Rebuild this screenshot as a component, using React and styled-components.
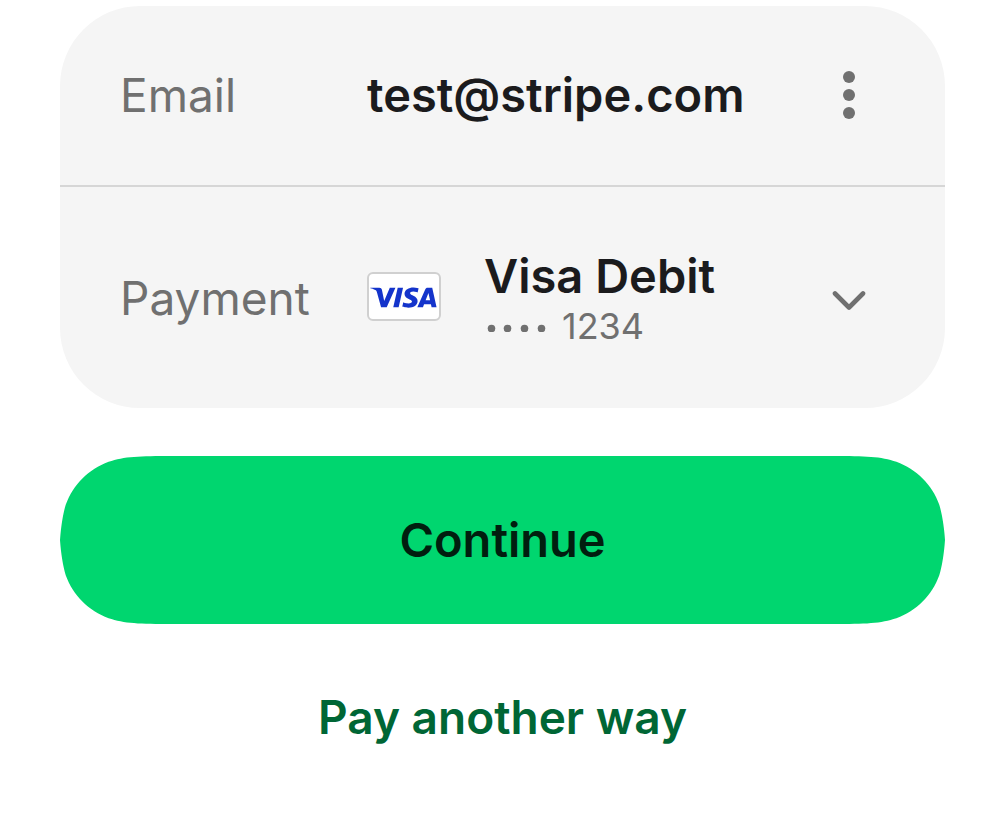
import React from "react";
import styled, { createGlobalStyle } from "styled-components";

const GlobalStyle = createGlobalStyle`
  *, *::before, *::after { box-sizing: border-box; }
  body {
    margin: 0;
    background: #ffffff;
    color: #1b1b1d;
    font-family: Inter, "Liberation Sans", sans-serif;
  }
  button { font-family: inherit; cursor: pointer; }
`;

// Continuous-curvature corner, as cubic segments running from the flat top
// edge to the middle of the left side of a pill 168px tall.
const cornerCurves = [
  [[118, 0], [84, 0], [67, 0], [51.5, 5]],
  [[48.6, 5.8], [28.6, 13], [13, 28.6], [5.8, 48.6]],
  [[5.8, 48.6], [3, 57.5], [1, 70], [0, 84]],
];

function cubicPoint([a, b, c, d], t) {
  const u = 1 - t;
  return [0, 1].map(
    (k) => u * u * u * a[k] + 3 * u * u * t * b[k] + 3 * u * t * t * c[k] + t * t * t * d[k]
  );
}

// The corner mirrored to all four sides, as a CSS polygon whose ends keep
// their shape while the button stretches.
function smoothPill(curves, height) {
  const steps = 16;
  const corner = curves.flatMap((curve) =>
    Array.from({ length: steps + 1 }, (_, i) => cubicPoint(curve, i / steps))
  );
  const lower = [...corner].reverse().map(([x, y]) => [x, height - y]);
  const side = [...corner, ...lower];
  const left = side.map(([x, y]) => `${x.toFixed(2)}px ${y.toFixed(2)}px`);
  const right = [...side].reverse().map(([x, y]) => `calc(100% - ${x.toFixed(2)}px) ${y.toFixed(2)}px`);
  return `polygon(${[...left, ...right].join(", ")})`;
}

const Checkout = styled.main`
  display: flex;
  flex-direction: column;
  padding: 6px 60px 60px;
`;

const Details = styled.section`
  background: #f5f5f5;
  border-radius: 80px;
  margin-bottom: 48px;
`;

const Row = styled.div`
  display: grid;
  grid-template-columns: 247px 1fr 72px;
  align-items: center;
  height: ${(p) => p.$height}px;
  padding: 0 60px ${(p) => p.$bottom || 0}px;

  & + & { border-top: 2px solid #d6d6d6; }
`;

const Label = styled.span`
  color: #707070;
  font-size: 46px;
  line-height: 56px;
`;

const Value = styled.span`
  font-size: 47px;
  font-weight: 600;
  line-height: 56px;
  white-space: nowrap;
`;

const Method = styled.div`
  display: flex;
  align-items: center;
  gap: 43px;
`;

const MethodText = styled.div`
  display: flex;
  flex-direction: column;
`;

const CardNumber = styled.span`
  display: flex;
  align-items: center;
  gap: 16px;
  color: #707070;
  font-size: 36px;
  line-height: 44px;
`;

const MaskDots = styled.svg`
  width: 62px;
  height: 12px;
  fill: currentColor;
`;

const CardLogo = styled.svg`
  flex: none;
  width: 74px;
  height: 49px;
  margin-bottom: 3px;
`;

const IconButton = styled.button`
  display: grid;
  place-items: center;
  width: 72px;
  height: 72px;
  padding: 0;
  border: 0;
  background: transparent;
  color: #707070;
`;

const PrimaryButton = styled.button`
  height: 168px;
  border: 0;
  clip-path: ${smoothPill(cornerCurves, 168)};
  background: #00d66f;
  color: #011e0f;
  font-size: 47px;
  font-weight: 600;
  line-height: 56px;
  margin-bottom: 65px;
`;

const TextButton = styled.button`
  align-self: center;
  padding: 0;
  border: 0;
  background: transparent;
  color: #006635;
  font-size: 46px;
  font-weight: 600;
  line-height: 56px;
`;

function VisaLogo() {
  return (
    <CardLogo viewBox="0 0 74 49" role="img" aria-label="Visa">
      <rect x="1" y="1" width="72" height="47" rx="5" fill="#fff" stroke="#d0d0d0" strokeWidth="2" />
      <g transform="translate(3.2 15.4) scale(.0664 .0624)" fill="#1434cb">
        <path d="M651.19.5c-70.93 0-134.32 36.77-134.32 104.69 0 77.9 112.42 83.28 112.42 122.42 0 16.48-18.88 31.23-51.14 31.23-45.77 0-79.98-20.61-79.98-20.61l-14.64 68.55s39.41 17.41 91.73 17.41c77.55 0 138.58-38.57 138.58-107.66 0-82.32-112.89-87.54-112.89-123.86 0-12.91 15.5-27.05 47.66-27.05 36.29 0 65.89 14.99 65.89 14.99l14.33-66.2S696.61.5 651.18.5zM2.22 5.5.5 15.49s29.84 5.46 56.72 16.36c34.61 12.49 37.07 19.77 42.9 42.35l63.51 244.83h85.14L379.93 5.5h-84.94l-84.28 213.17-34.39-180.7c-3.15-20.68-19.13-32.48-38.68-32.48zm411.87 0-66.63 313.53h81L494.85 5.5h-80.76zm451.76 0c-19.53 0-29.88 10.46-37.47 28.73L709.7 319.03h84.94l16.43-47.47h103.48l9.99 47.47h74.95L934.11 5.5zm11.05 84.71 25.18 117.65h-67.45z" />
      </g>
    </CardLogo>
  );
}

export default function App() {
  return (
    <>
      <GlobalStyle />
      <Checkout>
        <Details aria-label="Checkout details">
          <Row $height={179} $bottom={2}>
            <Label>Email</Label>
            <Value>test@stripe.com</Value>
            <IconButton type="button" aria-label="Account options">
              <svg width="12" height="48" viewBox="0 0 12 48" fill="currentColor">
                <circle cx="6" cy="6" r="6" />
                <circle cx="6" cy="24" r="6" />
                <circle cx="6" cy="42" r="6" />
              </svg>
            </IconButton>
          </Row>
          <Row $height={223}>
            <Label>Payment</Label>
            <Method>
              <VisaLogo />
              <MethodText>
                <Value>Visa Debit</Value>
                <CardNumber>
                  <MaskDots viewBox="0 0 62 12" aria-label="Card ending in">
                    <circle cx="7.5" cy="8.5" r="3.8" />
                    <circle cx="23.5" cy="8.5" r="3.8" />
                    <circle cx="40.5" cy="8.5" r="3.8" />
                    <circle cx="57.5" cy="8.5" r="3.8" />
                  </MaskDots>
                  1234
                </CardNumber>
              </MethodText>
            </Method>
            <IconButton type="button" aria-label="Change payment method">
              <svg width="34" height="24" viewBox="0 0 34 24" fill="none">
                <path d="M3 7.5l14 14 14-14" stroke="currentColor" strokeWidth="4.6" strokeLinecap="round" strokeLinejoin="round" />
              </svg>
            </IconButton>
          </Row>
        </Details>
        <PrimaryButton type="button">Continue</PrimaryButton>
        <TextButton type="button">Pay another way</TextButton>
      </Checkout>
    </>
  );
}
